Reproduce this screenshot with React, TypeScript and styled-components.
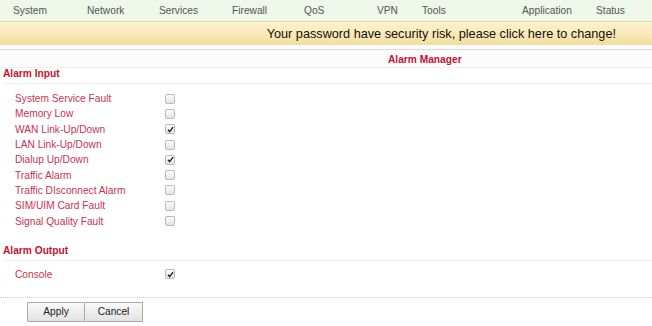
import React from 'react';
import styled, { createGlobalStyle } from 'styled-components';

const GlobalStyle = createGlobalStyle`
  html, body {
    margin: 0;
    padding: 0;
    background: #fff;
    font-family: 'Liberation Sans', Arial, sans-serif;
  }
`;

const Page = styled.div`
  width: 652px;
  height: 326px;
  overflow: hidden;
  background: #fff;
`;

const NavBar = styled.div`
  display: flex;
  height: 22px;
  align-items: center;
  background: #eff6ea;
  border-bottom: 1px solid #e2dbb0;
  box-sizing: border-box;
`;

const NavItem = styled.div<{ $width: number }>`
  width: ${(p) => p.$width}px;
  flex: none;
  padding-left: 13px;
  box-sizing: border-box;
  font-size: 10.2px;
  color: #555;
  white-space: nowrap;
`;

const Banner = styled.div`
  height: 23px;
  display: flex;
  align-items: center;
  justify-content: flex-end;
  padding-right: 36px;
  background: linear-gradient(to bottom, #fcf2cd 0%, #f8e8b4 60%, #f4dd9e 100%);
  font-size: 12.7px;
  color: #111;
  cursor: pointer;
`;

const TitleRow = styled.div`
  margin-top: 4px;
  height: 19px;
  box-sizing: border-box;
  padding: 4px 0 0 388px;
  line-height: 12px;
  border-top: 1px solid #d8d8d8;
  border-bottom: 1px solid #f0f0f0;
  background: #fcfcfc;
  font-size: 10.2px;
  font-weight: bold;
  color: #c8102e;
`;

const Section = styled.div<{ $top: number }>`
  margin-top: ${(p) => p.$top}px;
`;

const SectionHeader = styled.div`
  height: 15px;
  line-height: 12px;
  font-size: 10.2px;
  font-weight: bold;
  color: #c8102e;
  border-bottom: 1px solid #efefef;
  margin-left: 3px;
`;

const List = styled.div<{ $pad: number }>`
  padding-top: ${(p) => p.$pad}px;
  display: flex;
  flex-direction: column;
`;

const Row = styled.label`
  height: 15.3px;
  display: flex;
  align-items: center;
`;

const Label = styled.span`
  width: 150px;
  padding-left: 15px;
  font-size: 10.2px;
  color: #c8334f;
`;

const Box = styled.span`
  width: 8px;
  height: 8px;
  border: 1px solid #b9b9b9;
  border-radius: 2px;
  background: linear-gradient(to bottom, #fdfdfd, #e4e4e4);
  display: flex;
  align-items: center;
  justify-content: center;
`;

const Footer = styled.div`
  margin-top: 15px;
  border-top: 1px dotted #cfcfcf;
  padding: 4px 0 0 27px;
  display: flex;
`;

const Button = styled.button<{ $width: number }>`
  width: ${(p) => p.$width}px;
  height: 20px;
  margin: 0;
  padding: 0;
  font-family: 'Liberation Sans', Arial, sans-serif;
  font-size: 10.2px;
  color: #222;
  border: 1px solid #a9a9a9;
  border-radius: 1px;
  background: linear-gradient(to bottom, #fafafa, #e2e2e2);
  & + & {
    border-left: none;
  }
`;

const navItems: [string, number][] = [
  ['System', 74],
  ['Network', 72],
  ['Services', 73],
  ['Firewall', 72],
  ['QoS', 73],
  ['VPN', 45],
  ['Tools', 100],
  ['Application', 74],
  ['Status', 69],
];

const inputs: [string, boolean][] = [
  ['System Service Fault', false],
  ['Memory Low', false],
  ['WAN Link-Up/Down', true],
  ['LAN Link-Up/Down', false],
  ['Dialup Up/Down', true],
  ['Traffic Alarm', false],
  ['Traffic DIsconnect Alarm', false],
  ['SIM/UIM Card Fault', false],
  ['Signal Quality Fault', false],
];

function Check({ checked }: { checked: boolean }) {
  return (
    <Box>
      {checked && (
        <svg width="7" height="7" viewBox="0 0 7 7">
          <path d="M1 3.8 L2.7 5.6 L6 1.2" stroke="#222" strokeWidth="1.4" fill="none" />
        </svg>
      )}
    </Box>
  );
}

export default function App() {
  return (
    <Page>
      <GlobalStyle />
      <NavBar>
        {navItems.map(([name, w]) => (
          <NavItem key={name} $width={w}>
            {name}
          </NavItem>
        ))}
      </NavBar>
      <Banner>Your password have security risk, please click here to change!</Banner>
      <TitleRow>Alarm Manager</TitleRow>

      <Section $top={0}>
        <SectionHeader>Alarm Input</SectionHeader>
        <List $pad={7}>
          {inputs.map(([name, checked]) => (
            <Row key={name}>
              <Label>{name}</Label>
              <Check checked={checked} />
            </Row>
          ))}
        </List>
      </Section>

      <Section $top={16}>
        <SectionHeader>Alarm Output</SectionHeader>
        <List $pad={6}>
          <Row>
            <Label>Console</Label>
            <Check checked />
          </Row>
        </List>
      </Section>

      <Footer>
        <Button $width={58}>Apply</Button>
        <Button $width={58}>Cancel</Button>
      </Footer>
    </Page>
  );
}
